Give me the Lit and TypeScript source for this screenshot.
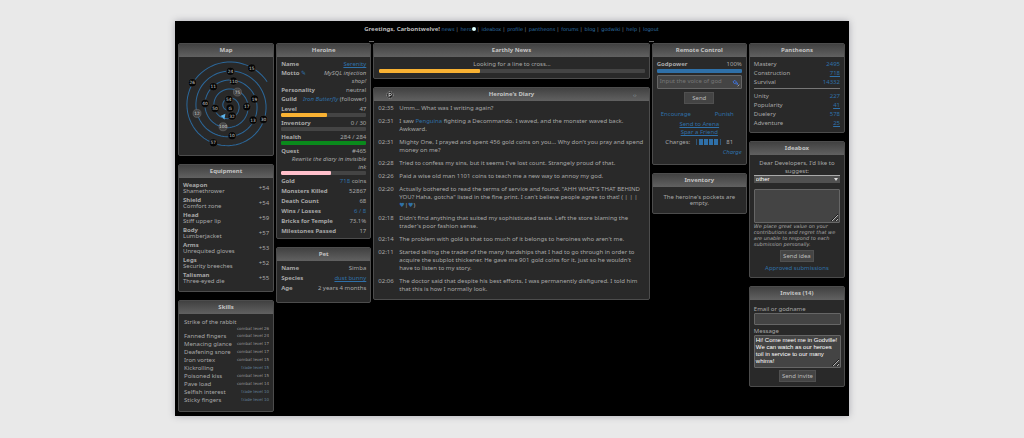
import { LitElement, html, svg, css, nothing } from "lit";
import { customElement, property, state } from "lit/decorators.js";

const theme = css`
  * { box-sizing: border-box; }
  a { color: #2f70a8; text-decoration: none; }
  a.under { text-decoration: underline; }
  button {
    font: inherit; color: #bbb; background: #444; border: 1px solid #505050;
    padding: 0 2px; line-height: 10px; min-width: 30px; cursor: pointer;
  }
  textarea, input, select {
    display: block; width: 100%; margin: 0; background: #444; color: #fff;
    font: 6px/7px "Liberation Sans", Arial, sans-serif;
    border: 1px solid #666; border-radius: 1px; padding: 1px;
  }
  label { display: block; }
  .center { text-align: center; }
`;

@customElement("gv-panel")
class GvPanel extends LitElement {
  @property() heading = "";
  static styles = css`
    :host {
      display: block; background: #292929; border: 1px solid #4c4c4c;
      border-radius: 2px; overflow: hidden;
    }
    .head {
      display: grid; grid-template-columns: 1fr auto 1fr; align-items: center;
      height: 13px; padding: 0 12px;
      background: linear-gradient(#414141, #616161);
    }
    .title { margin: 0; font-size: inherit; line-height: 13px; color: #c4c4c4; }
    .right { text-align: right; }
  `;
  render() {
    return html`
      <header class="head">
        <slot name="left"><span></span></slot>
        <h2 class="title">${this.heading}</h2>
        <span class="right"><slot name="right"></slot></span>
      </header>
      <slot></slot>`;
  }
}

@customElement("gv-bar")
class GvBar extends LitElement {
  @property({ type: Number }) value = 0;
  @property() color = "#f9b233";
  static styles = css`
    :host { display: block; height: 4px; background: #444; border-radius: 1px; overflow: hidden; }
    .fill { height: 100%; border-radius: 1px; }
  `;
  render() {
    return html`<div class="fill" role="progressbar" aria-valuenow=${this.value}
      style="width:${this.value}%;background:${this.color}"></div>`;
  }
}

const towns: [number, number, string, boolean?][] = [
  [233, 156, "15"], [169, 166, "24"], [178, 195, "110"], [118, 212, "11"],
  [55, 200, "26"], [190, 228, "75", true], [241, 249, "19"], [164, 250, "54"],
  [93, 262, "40"], [123, 277, "50"], [168, 276, "G"], [218, 272, "17"],
  [174, 300, "32"], [69, 292, "12", true], [237, 312, "13"], [268, 310, "30"],
  [147, 332, "100", true], [174, 359, "10"], [118, 380, "57"],
];

function spiral(): string {
  const pts: string[] = [];
  for (let t = -0.16; t < 4.5; t += 0.015) {
    const r = 132 - 27 * t;
    const a = -Math.PI / 2 - t * 2 * Math.PI;
    pts.push(`${(164 + r * Math.cos(a)).toFixed(1)} ${(270 + r * Math.sin(a)).toFixed(1)}`);
  }
  return "M" + pts.join("L");
}

@customElement("gv-map")
class GvMap extends LitElement {
  static styles = css`
    :host { display: block; }
    svg { display: block; width: 100%; }
    .path { fill: none; stroke: #2c689b; stroke-width: 3; }
    .town { fill: #050505; stroke: #3c3c3c; stroke-width: 1.5; }
    .far { fill: #444; stroke: #777; }
    .num { font: 13px "DejaVu Sans", sans-serif; fill: #d0d0d0; text-anchor: middle; }
    .here { fill: #5db4ea; }
  `;
  render() {
    return html`<svg viewBox="15 123 282 294" role="img" aria-label="Map">
      <path class="path" d=${spiral()}></path>
      ${towns.map(([x, y, n, far]) => svg`
        <circle class="town ${far ? "far" : ""}" cx=${x} cy=${y} r="12"></circle>
        <text class="num" x=${x} y=${y + 5}>${n}</text>`)}
      <path class="here" d="M139 300L154 293L151 311L146 304Z"></path>
    </svg>`;
  }
}

const equipment = [
  ["Weapon", "Shamethrower", "+54"], ["Shield", "Comfort zone", "+54"],
  ["Head", "Stiff upper lip", "+59"], ["Body", "Lumberjacket", "+57"],
  ["Arms", "Unrequited gloves", "+53"], ["Legs", "Security breeches", "+52"],
  ["Talisman", "Three-eyed die", "+55"],
];
const skills = [
  ["Strike of the rabbit", "combat level 26"], ["Fanned fingers", "combat level 24"],
  ["Menacing glance", "combat level 17"], ["Deafening snore", "combat level 17"],
  ["Iron vortex", "combat level 15"], ["Kickrolling", "trade level 15"],
  ["Poisoned kiss", "combat level 15"], ["Pave load", "combat level 14"],
  ["Selfish interest", "trade level 10"], ["Sticky fingers", "trade level 10"],
];
const pantheons: [string, string, boolean][][] = [
  [["Mastery", "2495", false], ["Construction", "718", true], ["Survival", "14332", false]],
  [["Unity", "227", false], ["Popularity", "41", true], ["Duelery", "578", false], ["Adventure", "25", true]],
];
const diary: [string, unknown][] = [
  ["02:35", "Umm... What was I writing again?"],
  ["02:31", html`I saw <a href="#">Penguina</a> fighting a Decommando. I waved, and the monster waved back. Awkward.`],
  ["02:31", "Mighty One, I prayed and spent 456 gold coins on you... Why don't you pray and spend money on me?"],
  ["02:28", "Tried to confess my sins, but it seems I've lost count. Strangely proud of that."],
  ["02:26", "Paid a wise old man 1101 coins to teach me a new way to annoy my god."],
  ["02:20", html`Actually bothered to read the terms of service and found, "AHH WHAT'S THAT BEHIND YOU? Haha, gotcha" listed in the fine print. I can't believe people agree to that! ( | | | <span class="hearts"><a href="#">♥</a>|<a href="#">♥</a>)</span>`],
  ["02:18", "Didn't find anything that suited my sophisticated taste. Left the store blaming the trader's poor fashion sense."],
  ["02:14", "The problem with gold is that too much of it belongs to heroines who aren't me."],
  ["02:11", "Started telling the trader of the many hardships that I had to go through in order to acquire the subplot thickener. He gave me 901 gold coins for it, just so he wouldn't have to listen to my story."],
  ["02:06", "The doctor said that despite his best efforts, I was permanently disfigured. I told him that this is how I normally look."],
];
const nav = ["news", "hero", "ideabox", "profile", "pantheons", "forums", "blog", "godwiki", "help", "logout"];

@customElement("app-root")
class AppRoot extends LitElement {
  @state() private message = "Hi! Come meet me in Godville! We can watch as our heroes toil in service to our many whims!";

  static styles = [theme, css`
    :host {
      display: block; box-sizing: border-box; min-height: 100vh; padding: 21px 0; background: #e9e9e9;
      font: 6px/8px "Noto Sans", "DejaVu Sans", sans-serif; color: #a8a8a8;
    }
    .page {
      max-width: 674px; margin: 0 auto; padding: 4px 4px 4px 3px;
      background: #000; box-shadow: 0 0 7px #a8a8b0;
    }
    .nav { text-align: center; color: #888; margin-bottom: 10px; font: 5px/8px "DejaVu Sans", sans-serif; }
    .nav b { color: #bbb; font: bold 6px/8px "Noto Sans", sans-serif; }
    .sep { margin-right: 1px; }
    .dot { display: inline-block; width: 4px; height: 4px; border-radius: 50%; background: #dff; }
    .cols {
      display: grid; grid-template-columns: 96fr 95fr 276fr 95fr 96fr;
      column-gap: 2px; align-items: start;
    }
    .col { display: grid; gap: 8px; min-width: 0; }
    .mid { position: relative; }
    .mid::before, .mid::after { content: ""; position: absolute; top: -2px; width: 5px; height: 1px; background: #666; }
    .mid::before { left: -4px; }
    .mid::after { right: -4px; }
    .body { padding: 3px 4px 5px; }
    .rows { display: grid; gap: 2px; }
    .hero { padding-bottom: 3px; }
    .close { display: grid; gap: 1px; }
    .row { display: flex; justify-content: space-between; gap: 4px; }
    .row > :first-child { white-space: nowrap; }
    .row > :last-child { text-align: right; }
    .pet { padding-bottom: 10px; }
    .equip { display: grid; padding: 4px; line-height: 6px; }
    .item { display: flex; justify-content: space-between; align-items: center; padding-bottom: 3px; }
    .item b { display: block; }
    .skills { padding: 4px 4px 7px 5px; }
    .skill { display: flex; flex-wrap: wrap; justify-content: space-between; align-items: center; column-gap: 5px; }
    .lvl { margin-left: auto; font: 4px/6px "DejaVu Sans", sans-serif; color: #999; }
    .trade { color: #62809a; }
    .italic { font-style: italic; text-align: right; }
    .quest { padding-left: 8px; }
    .news { padding: 3px 4px 5px 5px; text-align: center; }
    .under-text { margin-top: 1px; }
    .entries { margin: 0; padding: 3px 4px 6px; display: grid; gap: 5px; }
    .entry { display: grid; grid-template-columns: 21px 1fr; }
    .entry dd { margin: 0; }
    .hearts { white-space: nowrap; }
    .icon { display: block; width: 8px; height: 8px; }
    .fold { color: #8a949c; }
    .hr { width: 100%; border: 0; border-top: 1px solid #777; margin: 1px 0 2px; }
    .remote { padding-bottom: 8px; }
    .send { margin: 1px 0 4px; }
    .split { display: flex; justify-content: space-between; padding: 0 8px 0 4px; }
    .field { position: relative; }
    .pen { position: absolute; right: 2px; bottom: 2px; width: 8px; height: 8px; }
    .voice { height: 14px; padding: 2px; resize: none; font-family: "Noto Sans", sans-serif; }
    .voice::placeholder { color: #777; }
    .cells { display: inline-flex; gap: 1px; margin: 0 4px; padding: 0 2px; border: solid #2f5576; border-width: 0 1px; vertical-align: middle; }
    .cell { width: 4px; height: 6px; background: #2f70a8; }
    .empty { padding: 7px 10px; line-height: 6px; text-align: center; }
    .ideas { padding-top: 4px; }
    .small { font: italic 5px/6px "DejaVu Sans", sans-serif; }
    .idea { height: 34px; margin-top: 6px; resize: vertical; }
    .pick {
      appearance: none; height: 8px; padding: 0 2px; border: 0; border-top: 1px solid #aaa; border-radius: 0;
      background: #505050 url("data:image/svg+xml,%3Csvg xmlns='http://www.w3.org/2000/svg' viewBox='0 0 4 3'%3E%3Cpath d='M0 0h4L2 3z' fill='%23ddd'/%3E%3C/svg%3E") no-repeat right 2px center / 4px 3px;
    }
    .act { margin-top: 3px; }
    .invites { padding: 5px 3px 4px 4px; }
    .email { height: 12px; margin-bottom: 2px; }
    .msg { height: 33px; overflow: hidden; }
    .tail { margin-top: 2px; }
  `];

  private row(k: unknown, v: unknown) {
    return html`<div class="row"><b>${k}</b><span>${v}</span></div>`;
  }

  render() {
    return html`<div class="page">
      <nav class="nav"><b>Greetings, Carbontwelve!</b>
        ${nav.map((n, i) => html`${i ? html`<span class="sep"> | </span>` : nothing}<a href="#">${n}</a>${n === "hero" ? html`<span class="dot"></span>` : nothing}`)}
      </nav>
      <main class="cols">
        <div class="col">
          <gv-panel heading="Map"><gv-map></gv-map></gv-panel>
          <gv-panel heading="Equipment"><div class="equip">
            ${equipment.map(([k, n, v]) => html`<div class="item"><span><b>${k}</b>${n}</span><span>${v}</span></div>`)}
          </div></gv-panel>
          <gv-panel heading="Skills"><div class="skills">
            ${skills.map(([k, v]) => html`<div class="skill"><span>${k}</span><span class="lvl ${v.startsWith("trade") ? "trade" : ""}">${v}</span></div>`)}
          </div></gv-panel>
        </div>
        <div class="col">
          <gv-panel heading="Heroine"><div class="body rows hero">
            <div class="close">
              ${this.row("Name", html`<a class="under" href="#">Serenity</a>`)}
              ${this.row(html`Motto <a href="#">✎</a>`, html`<i>MySQL injection shop!</i>`)}
              ${this.row("Personality", "neutral")}
              ${this.row("Guild", html`<a href="#"><i>Iron Butterfly</i></a> (follower)`)}
            </div>
            <div>${this.row("Level", "47")}<gv-bar value="54"></gv-bar></div>
            <div>${this.row("Inventory", "0 / 30")}<gv-bar value="0"></gv-bar></div>
            <div>${this.row("Health", "284 / 284")}<gv-bar value="100" color="#0a8a1c"></gv-bar></div>
            <div>${this.row("Quest", "#465")}<div class="italic quest">Rewrite the diary in invisible ink</div><gv-bar value="58" color="#ffc0cb"></gv-bar></div>
            ${this.row("Gold", html`<a href="#">718</a> coins`)}
            ${this.row("Monsters Killed", "52867")}
            ${this.row("Death Count", "68")}
            ${this.row("Wins / Losses", html`<a href="#">6 / 8</a>`)}
            ${this.row("Bricks for Temple", "73.1%")}
            ${this.row("Milestones Passed", "17")}
          </div></gv-panel>
          <gv-panel heading="Pet"><div class="body rows pet">
            ${this.row("Name", "Simba")}
            ${this.row("Species", html`<a class="under" href="#">dust bunny</a>`)}
            ${this.row("Age", "2 years 4 months")}
          </div></gv-panel>
        </div>
        <div class="col mid">
          <gv-panel heading="Earthly News"><div class="news">
            Looking for a line to cross...<gv-bar class="under-text" value="38"></gv-bar>
          </div></gv-panel>
          <gv-panel heading="Heroine's Diary">
            <svg slot="left" class="icon" viewBox="0 0 16 16"><circle cx="8" cy="8" r="6.5" fill="#222" stroke="#bbb" stroke-width="1.5" stroke-dasharray="3 1.5"/><path d="M6 4v8M6 5h3a2 2 0 0 1 0 4H6" fill="none" stroke="#ddd" stroke-width="1.5"/></svg>
            <a slot="right" class="fold" href="#">‹›</a>
            <dl class="entries">
              ${diary.map(([t, x]) => html`<div class="entry"><dt>${t}</dt><dd>${x}</dd></div>`)}
            </dl>
          </gv-panel>
        </div>
        <div class="col">
          <gv-panel heading="Remote Control"><div class="body rows remote">
            <div>${this.row("Godpower", "100%")}<gv-bar class="under-text" value="100" color="#2f70a8"></gv-bar></div>
            <div class="field">
              <textarea class="voice" aria-label="Voice of god" placeholder="Input the voice of god"></textarea>
              <svg class="pen" viewBox="0 0 24 24" fill="none" stroke="#3f6fd0" stroke-width="3"><path d="M3 8l6-4 5 6-7 4zM10 14l8 2M14 10l4 6"/><path d="M17 22l5-5" stroke="#ccc" stroke-width="2"/></svg>
            </div>
            <div class="center send"><button>Send</button></div>
            <div class="split"><a href="#">Encourage</a><a href="#">Punish</a></div>
            <div class="center"><a class="under" href="#">Send to Arena</a><br><a class="under" href="#">Spar a Friend</a></div>
            <div class="center">Charges: <span class="cells">${[1, 2, 3, 4].map(() => html`<span class="cell"></span>`)}</span> 81</div>
            <div class="italic"><a href="#">Charge</a></div>
          </div></gv-panel>
          <gv-panel heading="Inventory"><div class="empty">The heroine's pockets are empty.</div></gv-panel>
        </div>
        <div class="col">
          <gv-panel heading="Pantheons"><div class="body close">
            ${pantheons.map((g, i) => html`${i ? html`<hr class="hr">` : nothing}
              ${g.map(([k, v, u]) => html`<div class="row"><span>${k}</span><a class=${u ? "under" : ""} href="#">${v}</a></div>`)}`)}
          </div></gv-panel>
          <gv-panel heading="Ideabox"><div class="body ideas">
            <label class="center" for="kind">Dear Developers, I'd like to suggest:</label>
            <select class="pick" id="kind"><option>other</option></select>
            <textarea class="idea" aria-label="Idea"></textarea>
            <div class="small">We place great value on your contributions and regret that we are unable to respond to each submission personally.</div>
            <div class="center act"><button>Send idea</button></div>
            <div class="center tail"><a href="#">Approved submissions</a></div>
          </div></gv-panel>
          <gv-panel heading="Invites (14)"><div class="invites">
            <label for="mail">Email or godname</label>
            <input class="email" id="mail" type="text">
            <label for="msg">Message</label>
            <textarea class="msg" id="msg" .value=${this.message}></textarea>
            <div class="center tail"><button>Send invite</button></div>
          </div></gv-panel>
        </div>
      </main>
    </div>`;
  }
}
